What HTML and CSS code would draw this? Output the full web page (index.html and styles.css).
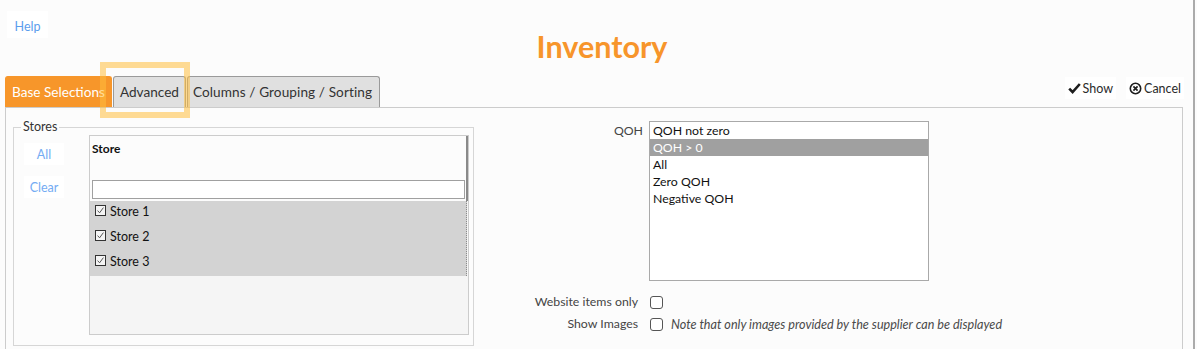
FILE: index.html
```html
<!DOCTYPE html>
<html>
<head>
<meta charset="utf-8">
<link rel="stylesheet" href="styles.css">
</head>
<body>
<div class="frame">
  <header class="header">
    <button class="help">Help</button>
    <h1 class="title">Inventory</h1>
    <div></div>
  </header>

  <div class="tabbar">
    <div class="tabs">
      <div class="tab active">Base Selections</div>
      <div class="tab">Advanced</div>
      <div class="tab wide">Columns / Grouping / Sorting</div>
    </div>
    <div class="tools">
      <button class="tool">
        <svg class="ico" width="13" height="12" viewBox="0 0 13 12"><path d="M1.2 6.6 L4.6 10 L11.8 2" fill="none" stroke="#1e1e1e" stroke-width="2.6" stroke-linejoin="miter"/></svg>
        <span>Show</span>
      </button>
      <button class="tool">
        <svg class="ico" width="13" height="13" viewBox="0 0 13 13"><circle cx="6.5" cy="6.5" r="5.2" fill="none" stroke="#1e1e1e" stroke-width="1.6"/><path d="M4.4 4.4 L8.6 8.6 M8.6 4.4 L4.4 8.6" stroke="#1e1e1e" stroke-width="1.7"/></svg>
        <span>Cancel</span>
      </button>
    </div>
    <div class="highlight"></div>
  </div>

  <div class="panel">
    <fieldset class="stores">
      <legend>Stores</legend>
      <div class="stores-body">
        <div class="sel-buttons">
          <button class="link-btn">All</button>
          <button class="link-btn">Clear</button>
        </div>
        <div class="storelist">
          <div class="sl-head">
            <div class="sl-title">Store</div>
            <input class="sl-filter" type="text">
          </div>
          <div class="sl-rows">
            <div class="sl-row"><svg class="cb" width="11" height="11" viewBox="0 0 11 11"><rect x="0.5" y="0.5" width="10" height="10" fill="#f4f4f4" stroke="#333"/><path d="M2.6 5.6 L4.6 7.8 L8.4 2.6" fill="none" stroke="#555" stroke-width="1"/></svg><span>Store 1</span></div>
            <div class="sl-row"><svg class="cb" width="11" height="11" viewBox="0 0 11 11"><rect x="0.5" y="0.5" width="10" height="10" fill="#f4f4f4" stroke="#333"/><path d="M2.6 5.6 L4.6 7.8 L8.4 2.6" fill="none" stroke="#555" stroke-width="1"/></svg><span>Store 2</span></div>
            <div class="sl-row"><svg class="cb" width="11" height="11" viewBox="0 0 11 11"><rect x="0.5" y="0.5" width="10" height="10" fill="#f4f4f4" stroke="#333"/><path d="M2.6 5.6 L4.6 7.8 L8.4 2.6" fill="none" stroke="#555" stroke-width="1"/></svg><span>Store 3</span></div>
          </div>
        </div>
      </div>
    </fieldset>

    <div class="options">
      <div class="opt-label qoh-label">QOH</div>
      <div class="listbox">
        <div class="lb-item">QOH not zero</div>
        <div class="lb-item selected">QOH &gt; 0</div>
        <div class="lb-item">All</div>
        <div class="lb-item">Zero QOH</div>
        <div class="lb-item">Negative QOH</div>
      </div>

      <div class="opt-label check-label first">Website items only</div>
      <div class="check-row first"><span class="box"></span></div>

      <div class="opt-label check-label">Show Images</div>
      <div class="check-row"><span class="box"></span><span class="note">Note that only images provided by the supplier can be displayed</span></div>
    </div>
  </div>
</div>
</body>
</html>
```

FILE: styles.css
```css
html, body {
  margin: 0;
  padding: 0;
  background: #fcfcfc;
}

body {
  font-family: Lato, "Open Sans", "Liberation Sans", sans-serif;
  color: #222;
  font-size: 12px;
}

button {
  font-family: inherit;
  border: none;
  cursor: pointer;
}

.frame {
  width: 1193px;
  height: 349px;
  border-right: 2px solid #ababab;
  overflow: hidden;
  position: relative;
  background: #fcfcfc;
}

/* header */
.header {
  display: grid;
  grid-template-columns: 1fr auto 1fr;
  box-sizing: border-box;
  height: 76px;
  padding: 11px 0 0 7px;
}

.help {
  justify-self: start;
  align-self: start;
  box-sizing: border-box;
  width: 41px;
  height: 27px;
  background: #ffffff;
  color: #5b9ded;
  font-size: 12.5px;
  padding: 3px 0 0 0;
}

.title {
  margin: 18px 0 0 0;
  padding-left: 4px;
  font-size: 30.5px;
  line-height: 34px;
  font-weight: 700;
  color: #f7952b;
  align-self: start;
}

/* tabs */
.tabbar {
  position: relative;
  display: flex;
  justify-content: space-between;
  align-items: flex-start;
  height: 31px;
  padding: 0 9px 0 5px;
}

.tabs {
  display: flex;
  gap: 1px;
  height: 31px;
}

.tab {
  box-sizing: border-box;
  height: 31px;
  display: flex;
  align-items: center;
  padding: 0 6px;
  border: 1px solid #9a9a9a;
  border-bottom: none;
  border-radius: 3px 3px 0 0;
  background: #e0e0e0;
  color: #333;
  font-size: 13.6px;
}

.tab.wide {
  padding: 0 7px 0 5px;
  letter-spacing: 0.1px;
}

.tab.active {
  background: #f7962a;
  border-color: #f7962a;
  color: #ffffff;
}

.tools {
  display: flex;
  gap: 10px;
  margin-top: 1px;
}

.tool {
  display: flex;
  align-items: center;
  gap: 2px;
  height: 22px;
  padding: 0 3px;
  background: #ffffff;
  color: #2a2a2a;
  font-size: 12.5px;
}

.ico {
  display: block;
}

.highlight {
  position: absolute;
  left: 100px;
  top: -14px;
  width: 78px;
  height: 44px;
  border: 6px solid rgba(255, 190, 60, 0.55);
  pointer-events: none;
}

/* panel */
.panel {
  display: flex;
  align-items: flex-start;
  box-sizing: border-box;
  margin: 0 10px 0 5px;
  height: 260px;
  border: 1px solid #cccccc;
  padding: 0 0 0 7px;
}

.stores {
  box-sizing: border-box;
  width: 461px;
  margin: 12px 0 0 0;
  padding: 0 4px 10px 10px;
  border: 1px solid #d6d6d6;
}

.stores legend {
  margin-left: -3px;
  padding: 0 2px;
  font-size: 12.5px;
  line-height: 14px;
  color: #333;
}

.stores-body {
  display: flex;
  gap: 25px;
}

.sel-buttons {
  display: flex;
  flex-direction: column;
  gap: 11px;
  padding-top: 9px;
}

.link-btn {
  width: 40px;
  height: 22px;
  padding: 0;
  background: #ffffff;
  color: #74acf3;
  font-size: 12.5px;
}

.storelist {
  box-sizing: border-box;
  width: 380px;
  height: 200px;
  margin-top: 1px;
  border: 1px solid #cccccc;
  background: #f5f5f5;
}

.sl-head {
  box-sizing: border-box;
  height: 65px;
  background: #fcfcfc;
  border-right: 2px solid #8a8a8a;
  padding: 5px 0 0 2px;
}

.sl-title {
  font-weight: 700;
  font-size: 12px;
  line-height: 16px;
  color: #111;
}

.sl-filter {
  display: block;
  box-sizing: border-box;
  width: 373px;
  height: 19px;
  margin-top: 23px;
  border: 1px solid #a0a0a0;
  background: #ffffff;
  padding: 0;
  outline: none;
}

.sl-rows {
  background: #d3d3d3;
  border-right: 1px dotted #8a8a8a;
  margin-right: 1px;
}

.sl-row {
  display: flex;
  align-items: center;
  gap: 4px;
  height: 25px;
  box-sizing: border-box;
  padding: 0 0 4px 5px;
  font-size: 12.5px;
  color: #111;
}

.cb {
  display: block;
  margin-top: -2px;
}

/* options */
.options {
  display: grid;
  grid-template-columns: 169px auto;
  column-gap: 6px;
  margin-top: 13px;
  align-items: start;
}

.opt-label {
  text-align: right;
  color: #444;
  font-size: 12.3px;
}

.qoh-label {
  line-height: 17px;
  padding-top: 1px;
}

.listbox {
  box-sizing: border-box;
  width: 280px;
  height: 160px;
  border: 1px solid #a9a9a9;
  background: #ffffff;
}

.lb-item {
  height: 17px;
  line-height: 17px;
  padding-left: 3px;
  font-size: 12.3px;
  color: #111;
}

.lb-item.selected {
  background: #a0a0a0;
  color: #ffffff;
}

.check-label {
  line-height: 22px;
  height: 22px;
  padding-right: 5px;
}

.check-label.first,
.check-row.first {
  margin-top: 10px;
}

.check-row {
  display: flex;
  align-items: center;
  gap: 8px;
  height: 22px;
  padding-left: 1px;
}

.box {
  box-sizing: border-box;
  width: 13px;
  height: 13px;
  border: 1px solid #555;
  border-radius: 3px;
  background: #ffffff;
}

.note {
  font-style: italic;
  color: #4a4a4a;
  font-size: 12.6px;
}
```
